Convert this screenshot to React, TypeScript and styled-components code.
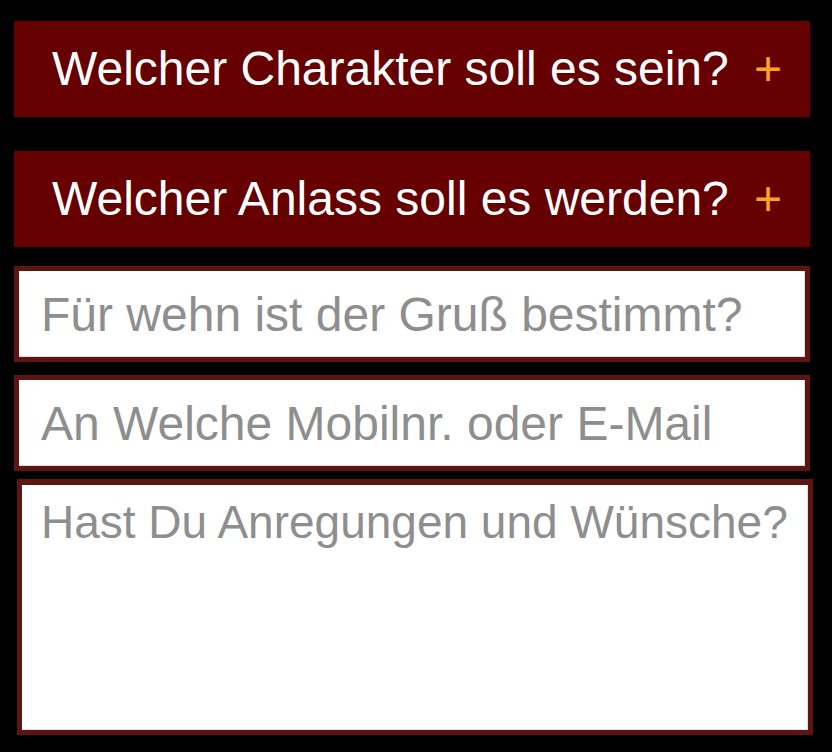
import styled, { createGlobalStyle } from "styled-components";

const GlobalStyle = createGlobalStyle`
  html, body {
    margin: 0;
    padding: 0;
    background: #000;
  }
  body {
    font-family: "Liberation Sans", Arial, sans-serif;
  }
`;

export default function App() {
  return (
    <>
      <GlobalStyle />
      <Form>
        <Toggle type="button">
          <span>Welcher Charakter soll es sein?</span>
          <Plus>+</Plus>
        </Toggle>
        <Toggle type="button" $top={34}>
          <span>Welcher Anlass soll es werden?</span>
          <Plus>+</Plus>
        </Toggle>
        <Input $top={19} placeholder="Für wehn ist der Gruß bestimmt?" />
        <Input $top={13} placeholder="An Welche Mobilnr. oder E-Mail" />
        <Wishes placeholder="Hast Du Anregungen und Wünsche?" />
      </Form>
    </>
  );
}

const Form = styled.form`
  display: flex;
  flex-direction: column;
  width: 796px;
  padding: 21px 0 0 14px;
`;

const Toggle = styled.button<{ $top?: number }>`
  display: flex;
  align-items: baseline;
  justify-content: space-between;
  height: 96px;
  margin-top: ${(p) => p.$top ?? 0}px;
  padding: 0 28px 0 38px;
  border: none;
  background: #660000;
  color: #fff;
  font-family: inherit;
  font-size: 48px;
  line-height: 96px;
  text-align: left;
  cursor: pointer;
`;

const Plus = styled.span`
  color: #fca41e;
  font-size: 48px;
`;

const Input = styled.input<{ $top?: number }>`
  box-sizing: border-box;
  height: 96px;
  margin-top: ${(p) => p.$top ?? 0}px;
  padding: 0 22px;
  border: 5px solid #5e1410;
  box-shadow: inset -1px -1px 0 #dcdcdc;
  background: #fff;
  font-family: inherit;
  font-size: 48px;
  color: #333;
  outline: none;

  &::placeholder {
    color: #8e8e8e;
  }
`;

const Wishes = styled.textarea`
  box-sizing: border-box;
  align-self: flex-start;
  width: 796px;
  height: 256px;
  margin: 8px 0 0 3px;
  padding: 10px 8px 10px 19px;
  border: 5px solid #5e1410;
  border-top-width: 6px;
  box-shadow: inset -1px -1px 0 #dcdcdc;
  background: #fff;
  font-family: inherit;
  font-size: 46px;
  color: #333;
  resize: none;
  outline: none;

  &::placeholder {
    color: #8e8e8e;
  }
`;
